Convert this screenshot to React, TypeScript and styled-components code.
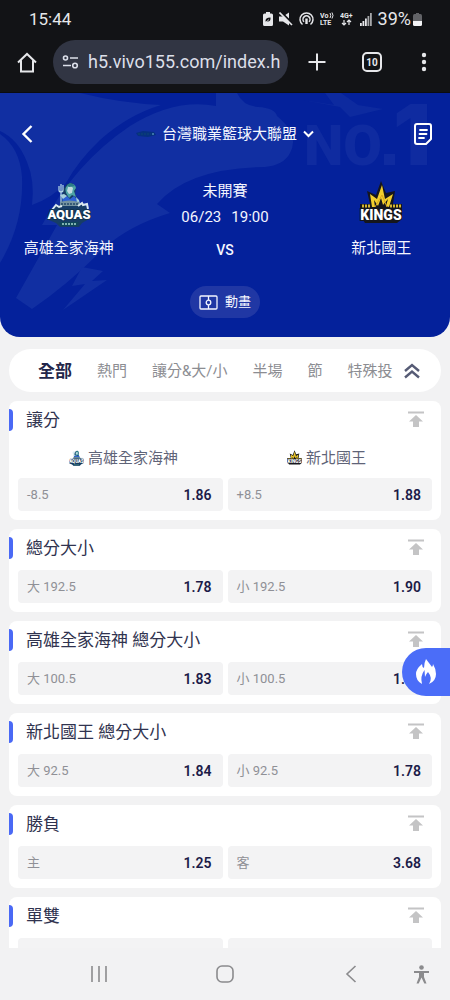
import React, { useState } from 'react';
import styled, { createGlobalStyle } from 'styled-components';

const GlobalStyle = createGlobalStyle`
  * { box-sizing: border-box; }
  body {
    margin: 0;
    background: #f2f2f3;
    font-family: Roboto, "Noto Sans CJK TC", sans-serif;
  }
  button {
    border: 0;
    padding: 0;
    background: none;
    color: inherit;
    font: inherit;
    cursor: pointer;
  }
  svg { display: block; flex: none; }
  h1, h2, p { margin: 0; font-weight: 400; }
`;

const Screen = styled.div`
  display: flex;
  flex-direction: column;
  height: 100vh;
  overflow: hidden;
`;

const BrowserChrome = styled.header`
  background: #121316;
  color: #e6e7ea;
  border-bottom: 1px solid #0b0c10;
`;

const StatusBar = styled.div`
  display: flex;
  align-items: center;
  justify-content: space-between;
  height: 38px;
  padding: 0 28px 0 29px;
  font-size: 17px;
  line-height: 20px;
`;

const StatusIcons = styled.div`
  display: flex;
  align-items: center;
  gap: 6px;
`;

const Battery = styled.div`
  display: flex;
  align-items: center;
  gap: 2px;
  font-size: 18px;
`;

const Toolbar = styled.div`
  display: flex;
  align-items: center;
  height: 54px;
  padding: 0 9px 6px 12px;
`;

const ToolButton = styled.button<{ $width: number }>`
  display: flex;
  align-items: center;
  justify-content: center;
  width: ${p => p.$width}px;
  height: 44px;
`;

const AddressBar = styled.label`
  display: flex;
  flex: 1;
  align-items: center;
  gap: 9px;
  min-width: 0;
  height: 44px;
  margin: 0 8px 0 12px;
  padding: 0 6px 0 9px;
  border-radius: 22px;
  background: #313543;
`;

const AddressInput = styled.input`
  flex: 1;
  min-width: 0;
  padding: 0;
  border: 0;
  outline: 0;
  background: none;
  color: #dcdfe9;
  font: 18px/24px Roboto, sans-serif;
`;

const Page = styled.main`
  flex: 1;
  min-height: 0;
  overflow: hidden;
`;

const Hero = styled.section`
  position: relative;
  isolation: isolate;
  overflow: hidden;
  padding-bottom: 19px;
  border-radius: 0 0 20px 20px;
  background: #04219b;
  color: #f4f6ff;
`;

const HeroArt = styled.svg`
  position: absolute;
  z-index: -1;
  inset: 0;
  width: 100%;
  height: 100%;
`;

const HeroBar = styled.div`
  display: flex;
  align-items: center;
  justify-content: space-between;
  height: 82px;
  padding: 0 18px;
`;

const LeagueButton = styled.button`
  display: flex;
  align-items: center;
  gap: 6px;
  font-size: 15px;
  line-height: 20px;
`;

const MatchUp = styled.div`
  display: grid;
  grid-template-columns: 11fr 14fr 11fr;
  padding-top: 6px;
`;

const Team = styled.div`
  display: flex;
  flex-direction: column;
  align-items: center;
  gap: 11px;
  font-size: 15px;
  line-height: 20px;
`;

const MatchInfo = styled.div`
  display: flex;
  flex-direction: column;
  align-items: center;
  gap: 6px;
  font-size: 15px;
  line-height: 20px;
`;

const Kickoff = styled.p`
  display: flex;
  gap: 10px;
`;

const Versus = styled.p`
  margin-top: 7px;
  font-size: 14px;
  font-weight: 500;
`;

const AnimationButton = styled.button`
  display: flex;
  align-items: center;
  gap: 7px;
  height: 32px;
  margin: 26px auto 0;
  padding: 0 9px;
  border-radius: 16px;
  background: #2037a4;
  font-size: 13px;
  line-height: 20px;
`;

const TabBar = styled.nav`
  display: flex;
  align-items: center;
  height: 43px;
  margin: 12px 9px 9px;
  padding: 0 10px 0 29px;
  border-radius: 22px;
  background: #fff;
`;

const TabList = styled.div`
  display: flex;
  flex: 1;
  align-items: center;
  gap: 25px;
  min-width: 0;
  overflow: hidden;
`;

const Tab = styled.button<{ $active: boolean }>`
  flex: none;
  color: ${p => (p.$active ? '#23264a' : '#8c8d92')};
  font-size: ${p => (p.$active ? 17 : 15)}px;
  font-weight: ${p => (p.$active ? 700 : 400)};
  line-height: 24px;
  white-space: nowrap;
`;

const Markets = styled.div`
  display: grid;
  gap: 9px;
  padding: 0 9px;
`;

const Card = styled.section`
  padding: 0 9px 9px;
  border-radius: 8px;
  background: #fff;
`;

const CardHeader = styled.div`
  display: flex;
  align-items: center;
  justify-content: space-between;
  height: 37px;
  margin: 0 -9px 4px;
  padding-right: 17px;
`;

const CardTitle = styled.h2`
  display: flex;
  align-items: center;
  gap: 13px;
  color: #30334f;
  font-size: 17px;
  line-height: 24px;

  &::before {
    content: "";
    width: 4px;
    height: 22px;
    border-radius: 0 4px 4px 0;
    background: #4a69f5;
  }
`;

const OddsRow = styled.div`
  display: grid;
  grid-template-columns: 1fr 1fr;
  gap: 5px;
`;

const TeamsRow = styled.div`
  display: grid;
  grid-template-columns: 1fr 1fr;
  padding: 0 4px 4px;
`;

const ColumnTeam = styled.p`
  display: flex;
  align-items: center;
  justify-content: center;
  gap: 4px;
  height: 32px;
  color: #5f6478;
  font-size: 15px;
  line-height: 20px;
`;

const Odd = styled.button`
  display: flex;
  align-items: center;
  justify-content: space-between;
  height: 33px;
  padding: 0 11px 0 9px;
  border-radius: 4px;
  background: #f3f3f4;
  color: #8f9096;
  font-size: 13px;
  line-height: 20px;
`;

const Price = styled.strong`
  color: #1c1b48;
  font-size: 14px;
  font-weight: 600;
`;

const HotButton = styled.button`
  position: fixed;
  right: 0;
  bottom: 304px;
  display: flex;
  align-items: center;
  justify-content: center;
  width: 48px;
  height: 48px;
  border-radius: 24px 0 0 24px;
  background: #4b6df8;
`;

const SystemNav = styled.nav`
  display: grid;
  grid-template-columns: 36px 1fr 1fr 1fr 36px;
  align-items: center;
  height: 52px;
  background: #f2f2f3;
  color: #8b8b8d;
`;

const NavButton = styled.button<{ $start?: boolean }>`
  display: flex;
  align-items: center;
  justify-content: ${p => (p.$start ? 'flex-start' : 'center')};
  height: 100%;
`;

const AquasLogo = ({ width = 44, height = 46 }: { width?: number; height?: number }) => (
  <svg width={width} height={height} viewBox="0 0 44 46" aria-hidden="true">
    <path d="M14 23 L16 8 L20 3 L25 2 L29 7 L28 13 L32 22 L39 25 L42 38 L35 42 L32 46 H13 L9 42 L2 39 L4 28 Z" fill="#173d66" />
    <path d="M12 5v4q0 2 2 2t2-2V4M14 3v19" stroke="#b9dce8" strokeWidth="1.2" fill="none" />
    <path d="M19 12q-2-6 3-9 6-1 7 4l-2 3 2 6-4-2-3 3z" fill="#4da3a5" />
    <path d="M21 6q3-2 5 1l-1 5-3 1-2-3z" fill="#c2dbe0" />
    <path d="M20 4l3-2 3 1 2 2-6 1z" fill="#2d7d88" />
    <path d="M15 16l5-1 3 3 4-3 5 5-2 4H16z" fill="#2e62d4" />
    <path d="M13 14l4-1 3 2-4 3zM29 16l3 3 1 4-3-1z" fill="#a9d1dc" />
    <path d="M13 21q9-3 19 0v4H13z" fill="#75939f" />
    <path d="M14 23h17" stroke="#244a69" strokeWidth="1.4" strokeDasharray="2 1" />
    <path d="M5 29l4-5 3 2 3-1M31 25l4-3 1 2 4-1 1 5" stroke="#dbe9ef" strokeWidth="2" fill="none" />
    <text x="22" y="38" textAnchor="middle" fontFamily="Roboto, sans-serif" fontSize="13" fontWeight="900" fill="#fff" stroke="#12344f" strokeWidth="2" paintOrder="stroke">AQUAS</text>
    <path d="M12 41h20l-2 4H14z" fill="#10475b" />
    <path d="M15 43h14" stroke="#a5d7ce" strokeWidth="1.4" strokeDasharray="2 1" />
  </svg>
);

const KingsLogo = ({ width = 44, height = 46 }: { width?: number; height?: number }) => (
  <svg width={width} height={height} viewBox="0 0 44 46" aria-hidden="true">
    <path d="M1 23h10L8 10l9 4 5-14 5 12 9-2-2 13h9v15l-5 4H6l-5-8z" fill="#15161d" />
    <path d="M13 26L11 13l7 5 5-14 3 14 8-5-4 13-3-1 2-7-5 6-2-7-3 8-4-6 1 7z" fill="#f1ce2d" />
    <path d="M16 26l7-12 5 12" stroke="#d9a81f" strokeWidth="1" fill="none" />
    <path d="M3 25h9M31 25h11" stroke="#d5b633" strokeWidth="3" strokeDasharray="2 1" />
    <text x="22" y="39" textAnchor="middle" fontFamily="Roboto, sans-serif" fontSize="14" fontWeight="900" fill="#fff" stroke="#15161d" strokeWidth="2" paintOrder="stroke">KINGS</text>
  </svg>
);

const HeroBackground = () => (
  <HeroArt viewBox="0 0 450 244" preserveAspectRatio="xMidYMid slice" aria-hidden="true">
    <g fill="#112fa2">
      <path d="M0 0H80Q120 10 161 12Q128 22 100 47Q78 68 66 90Q52 105 32 112Q35 88 27 69Q18 46 0 38Z" />
      <path d="M0 41Q20 55 22 84Q24 130 0 170Z" />
      <path d="M216 0H237Q243 13 258 14Q275 15 277 23Q300 42 290 60Q284 72 265 74Q188 75 157 111L170 120Q130 132 104 155Q70 190 32 216L16 205L57 132H42Q75 70 130 33Q175 5 216 13Z" />
      <path d="M82 174L72 193L85 191L63 217L107 187L92 188L103 178Z" />
    </g>
    <path d="M303 7L334 12L325 0H341L358 12L383 16L350 24L340 14Z" fill="#0d2a9f" />
    <g fill="#0f2ba0" fontFamily="Roboto, sans-serif" fontWeight="900">
      <text x="304" y="72" fontSize="56">NO</text>
      <rect x="384" y="61" width="11" height="11" />
      <text x="393" y="72" fontSize="84" fontFamily="Inter, sans-serif">1</text>
    </g>
  </HeroArt>
);

const TopIcon = () => (
  <svg width="16" height="17" viewBox="0 0 16 17" aria-hidden="true">
    <path d="M0 0.500H16V2.500H0ZM8 4L15 10.500H11V16H5V10.500H1Z" fill="#c4c4c5" />
  </svg>
);

type Market = { title: string; teams?: boolean; odds: [string, string][] };

const markets: Market[] = [
  { title: '讓分', teams: true, odds: [['-8.5', '1.86'], ['+8.5', '1.88']] },
  { title: '總分大小', odds: [['大 192.5', '1.78'], ['小 192.5', '1.90']] },
  { title: '高雄全家海神 總分大小', odds: [['大 100.5', '1.83'], ['小 100.5', '1.85']] },
  { title: '新北國王 總分大小', odds: [['大 92.5', '1.84'], ['小 92.5', '1.78']] },
  { title: '勝負', odds: [['主', '1.25'], ['客', '3.68']] },
  { title: '單雙', odds: [['', ''], ['', '']] },
];

const tabs = ['全部', '熱門', '讓分&大/小', '半場', '節', '特殊投'];

export default function App() {
  const [active, setActive] = useState('全部');
  const [url, setUrl] = useState('h5.vivo155.com/index.h');

  return (
    <Screen>
      <GlobalStyle />
      <BrowserChrome>
        <StatusBar>
          <time>15:44</time>
          <StatusIcons>
            <svg width="10" height="14" viewBox="0 0 10 14" aria-hidden="true">
              <path d="M3 0H7V1.5H8.5Q10 1.5 10 3V12.5Q10 14 8.5 14H1.5Q0 14 0 12.5V3Q0 1.5 1.5 1.5H3Z" fill="#e6e7ea" />
              <path d="M2.500 9.500Q2 5.500 7.500 5.500Q8 10 4 9.500Z" fill="#121316" />
              <path d="M2 11L6 7.500" stroke="#e6e7ea" strokeWidth="0.800" fill="none" />
            </svg>
            <svg width="14" height="14" viewBox="0 0 14 14" aria-hidden="true">
              <path d="M0 4.500H4L10 0.500V13.500L4 9.500H0Z" fill="#e6e7ea" />
              <path d="M2 0L15 13" stroke="#121316" strokeWidth="2" />
              <path d="M0.500 0.500L13 13" stroke="#e6e7ea" strokeWidth="1.600" />
            </svg>
            <svg width="15" height="14" viewBox="0 0 15 14" fill="none" stroke="#e6e7ea" strokeWidth="1.5" aria-hidden="true">
              <path d="M3.500 12.500A6.500 6.500 0 1 1 11.500 12.500M5 9.800A3.500 3.500 0 1 1 10 9.800" />
              <path d="M7.500 6.500V12" strokeWidth="2.400" />
            </svg>
            <svg width="14" height="16" viewBox="0 0 14 16" fill="#e6e7ea" fontFamily="Roboto, sans-serif" fontWeight="700" aria-hidden="true">
              <text x="0" y="7" fontSize="7">Vo</text>
              <path d="M10 2Q11.500 4.500 10 7M12 1.500Q14 4.500 12 7.500" stroke="#e6e7ea" fill="none" />
              <text x="0" y="14" fontSize="7">LTE</text>
            </svg>
            <svg width="14" height="16" viewBox="0 0 14 16" fill="#e6e7ea" aria-hidden="true">
              <text x="0" y="7" fontFamily="Roboto, sans-serif" fontWeight="700" fontSize="7">4G+</text>
              <path d="M4 9V14M2 12L4 14L6 12M9 14V9M7 11L9 9L11 11" stroke="#e6e7ea" strokeWidth="1.200" fill="none" />
            </svg>
            <svg width="12" height="13" viewBox="0 0 12 13" fill="#e6e7ea" aria-hidden="true">
              <path d="M0 10H1.800V13H0ZM2.500 8H4.300V13H2.500ZM5 5.500H6.800V13H5Z" />
              <path d="M7.500 3H9.300V13H7.500ZM10 0H11.800V13H10Z" opacity=".7" />
            </svg>
            <Battery>
              39%
              <svg width="9" height="13" viewBox="0 0 9 13" aria-hidden="true">
                <path d="M3 0H6V1H7.500Q9 1 9 3V8H0V3Q0 1 1.500 1H3Z" fill="#626367" />
                <path d="M0 8H9V11.500Q9 13 7.500 13H1.500Q0 13 0 11.500Z" fill="#f3f3f5" />
              </svg>
            </Battery>
          </StatusIcons>
        </StatusBar>
        <Toolbar>
          <ToolButton $width={29} aria-label="Home">
            <svg width="20" height="21" viewBox="0 0 20 21" fill="none" stroke="#e6e7ea" strokeWidth="2" aria-hidden="true">
              <path d="M1 10.500L10 2L19 10.500M4 8.500V19.500H16V8.500" />
            </svg>
          </ToolButton>
          <AddressBar>
            <svg width="17" height="14" viewBox="0 0 17 14" fill="none" stroke="#dcdfe9" strokeWidth="1.600" aria-label="Site settings">
              <circle cx="3.500" cy="3" r="2" />
              <path d="M8 3H16M1 10.500H9" />
              <circle cx="13" cy="10.500" r="2.300" />
            </svg>
            <AddressInput aria-label="Address" value={url} onChange={e => setUrl(e.target.value)} />
          </AddressBar>
          <ToolButton $width={41} aria-label="New tab">
            <svg width="18" height="18" viewBox="0 0 18 18" stroke="#e6e7ea" strokeWidth="2" aria-hidden="true">
              <path d="M9 0.500V17.500M0.500 9H17.500" />
            </svg>
          </ToolButton>
          <ToolButton $width={69} aria-label="Tabs">
            <svg width="20" height="20" viewBox="0 0 20 20" aria-hidden="true">
              <rect x="1" y="1" width="18" height="18" rx="4" fill="none" stroke="#e6e7ea" strokeWidth="2" />
              <text x="10" y="13.500" textAnchor="middle" fontFamily="Roboto, sans-serif" fontSize="10" fontWeight="700" fill="#e6e7ea">10</text>
            </svg>
          </ToolButton>
          <ToolButton $width={35} aria-label="Menu">
            <svg width="6" height="20" viewBox="0 0 6 20" fill="#e6e7ea" aria-hidden="true">
              <circle cx="3" cy="3" r="2.200" />
              <circle cx="3" cy="10" r="2.200" />
              <circle cx="3" cy="17" r="2.200" />
            </svg>
          </ToolButton>
        </Toolbar>
      </BrowserChrome>

      <Page>
        <Hero>
          <HeroBackground />
          <HeroBar>
            <ToolButton $width={18} aria-label="Back">
              <svg width="12" height="18" viewBox="0 0 12 18" fill="none" stroke="#fff" strokeWidth="2.400" aria-hidden="true">
                <path d="M10.500 1L2.500 9L10.500 17" />
              </svg>
            </ToolButton>
            <LeagueButton>
              <svg width="20" height="8" viewBox="0 0 20 8" aria-hidden="true">
                <path d="M0 3L7 1L18 2L20 5L12 7L2 6Z" fill="#06307f" />
                <path d="M2 4H15" stroke="#0c4672" strokeDasharray="2 1" />
                <circle cx="17" cy="4" r="1" fill="#4d89b5" />
              </svg>
              台灣職業籃球大聯盟
              <svg width="11" height="8" viewBox="0 0 11 8" fill="none" stroke="#fff" strokeWidth="2" aria-hidden="true">
                <path d="M1 1.500L5.500 6L10 1.500" />
              </svg>
            </LeagueButton>
            <ToolButton $width={18} aria-label="Bet records">
              <svg width="18" height="22" viewBox="0 0 18 22" fill="none" stroke="#fff" strokeWidth="2" aria-hidden="true">
                <path d="M1 3Q1 1 3 1H15Q17 1 17 3V16L12 21H3Q1 21 1 19Z" strokeLinejoin="round" />
                <path d="M6 7H13M5.500 11H12.500M5 15H10" strokeLinecap="round" strokeWidth="1.800" />
              </svg>
            </ToolButton>
          </HeroBar>
          <MatchUp>
            <Team>
              <AquasLogo />
              高雄全家海神
            </Team>
            <MatchInfo>
              <p>未開賽</p>
              <Kickoff>
                <span>06/23</span>
                <span>19:00</span>
              </Kickoff>
              <Versus>VS</Versus>
            </MatchInfo>
            <Team>
              <KingsLogo />
              新北國王
            </Team>
          </MatchUp>
          <AnimationButton>
            <svg width="19" height="15" viewBox="0 0 19 15" fill="none" stroke="#f4f6ff" strokeWidth="1.300" aria-hidden="true">
              <rect x="1" y="1" width="17" height="13" rx="1" />
              <circle cx="9.500" cy="7.500" r="2.300" />
              <path d="M9.500 1V5M9.500 10V14" />
            </svg>
            動畫
          </AnimationButton>
        </Hero>

        <TabBar>
          <TabList>
            {tabs.map(tab => (
              <Tab key={tab} $active={tab === active} onClick={() => setActive(tab)}>
                {tab}
              </Tab>
            ))}
          </TabList>
          <ToolButton $width={38} aria-label="Collapse all">
            <svg width="16" height="16" viewBox="0 0 16 16" fill="none" stroke="#565b75" strokeWidth="2.400" aria-hidden="true">
              <path d="M1 8L8 2L15 8M1 14.500L8 8.500L15 14.500" />
            </svg>
          </ToolButton>
        </TabBar>

        <Markets>
          {markets.map(market => (
            <Card key={market.title}>
              <CardHeader>
                <CardTitle>{market.title}</CardTitle>
                <button aria-label="Pin to top">
                  <TopIcon />
                </button>
              </CardHeader>
              {market.teams && (
                <TeamsRow>
                  <ColumnTeam>
                    <AquasLogo width={15} height={16} />
                    高雄全家海神
                  </ColumnTeam>
                  <ColumnTeam>
                    <KingsLogo width={15} height={16} />
                    新北國王
                  </ColumnTeam>
                </TeamsRow>
              )}
              <OddsRow>
                {market.odds.map(([label, price], i) => (
                  <Odd key={i}>
                    <span>{label}</span>
                    <Price>{price}</Price>
                  </Odd>
                ))}
              </OddsRow>
            </Card>
          ))}
        </Markets>
      </Page>

      <HotButton aria-label="Hot">
        <svg width="22" height="26" viewBox="0 0 22 26" aria-hidden="true">
          <path d="M11 0Q14 4 17 8Q18 7 18 5Q21 10 21 15Q21 22 14 25Q18 19 13 13Q11 15 10 18L9.500 11Q5 17 7 25Q1 22 1 15Q1 10 7 5Q7 8 9 9Q9 4 11 0Z" fill="#fff" />
        </svg>
      </HotButton>

      <SystemNav>
        <span />
        <NavButton aria-label="Recent apps">
          <svg width="18" height="18" viewBox="0 0 18 18" stroke="currentColor" strokeWidth="1.600" aria-hidden="true">
            <path d="M2 1V17M9 1V17M16 1V17" />
          </svg>
        </NavButton>
        <NavButton aria-label="Home screen">
          <svg width="18" height="18" viewBox="0 0 18 18" fill="none" stroke="currentColor" strokeWidth="1.600" aria-hidden="true">
            <rect x="1" y="1" width="16" height="16" rx="5" />
          </svg>
        </NavButton>
        <NavButton aria-label="Go back">
          <svg width="12" height="18" viewBox="0 0 12 18" fill="none" stroke="currentColor" strokeWidth="1.600" aria-hidden="true">
            <path d="M10.500 1L2 9L10.500 17" />
          </svg>
        </NavButton>
        <NavButton $start aria-label="Accessibility">
          <svg width="15" height="19" viewBox="0 0 15 19" fill="currentColor" aria-hidden="true">
            <circle cx="7.500" cy="2.500" r="2.300" />
            <path d="M0 6H15V8H10V12L12.500 18.500H10.300L7.500 12.500L4.700 18.500H2.500L5 12V8H0Z" />
          </svg>
        </NavButton>
      </SystemNav>
    </Screen>
  );
}
